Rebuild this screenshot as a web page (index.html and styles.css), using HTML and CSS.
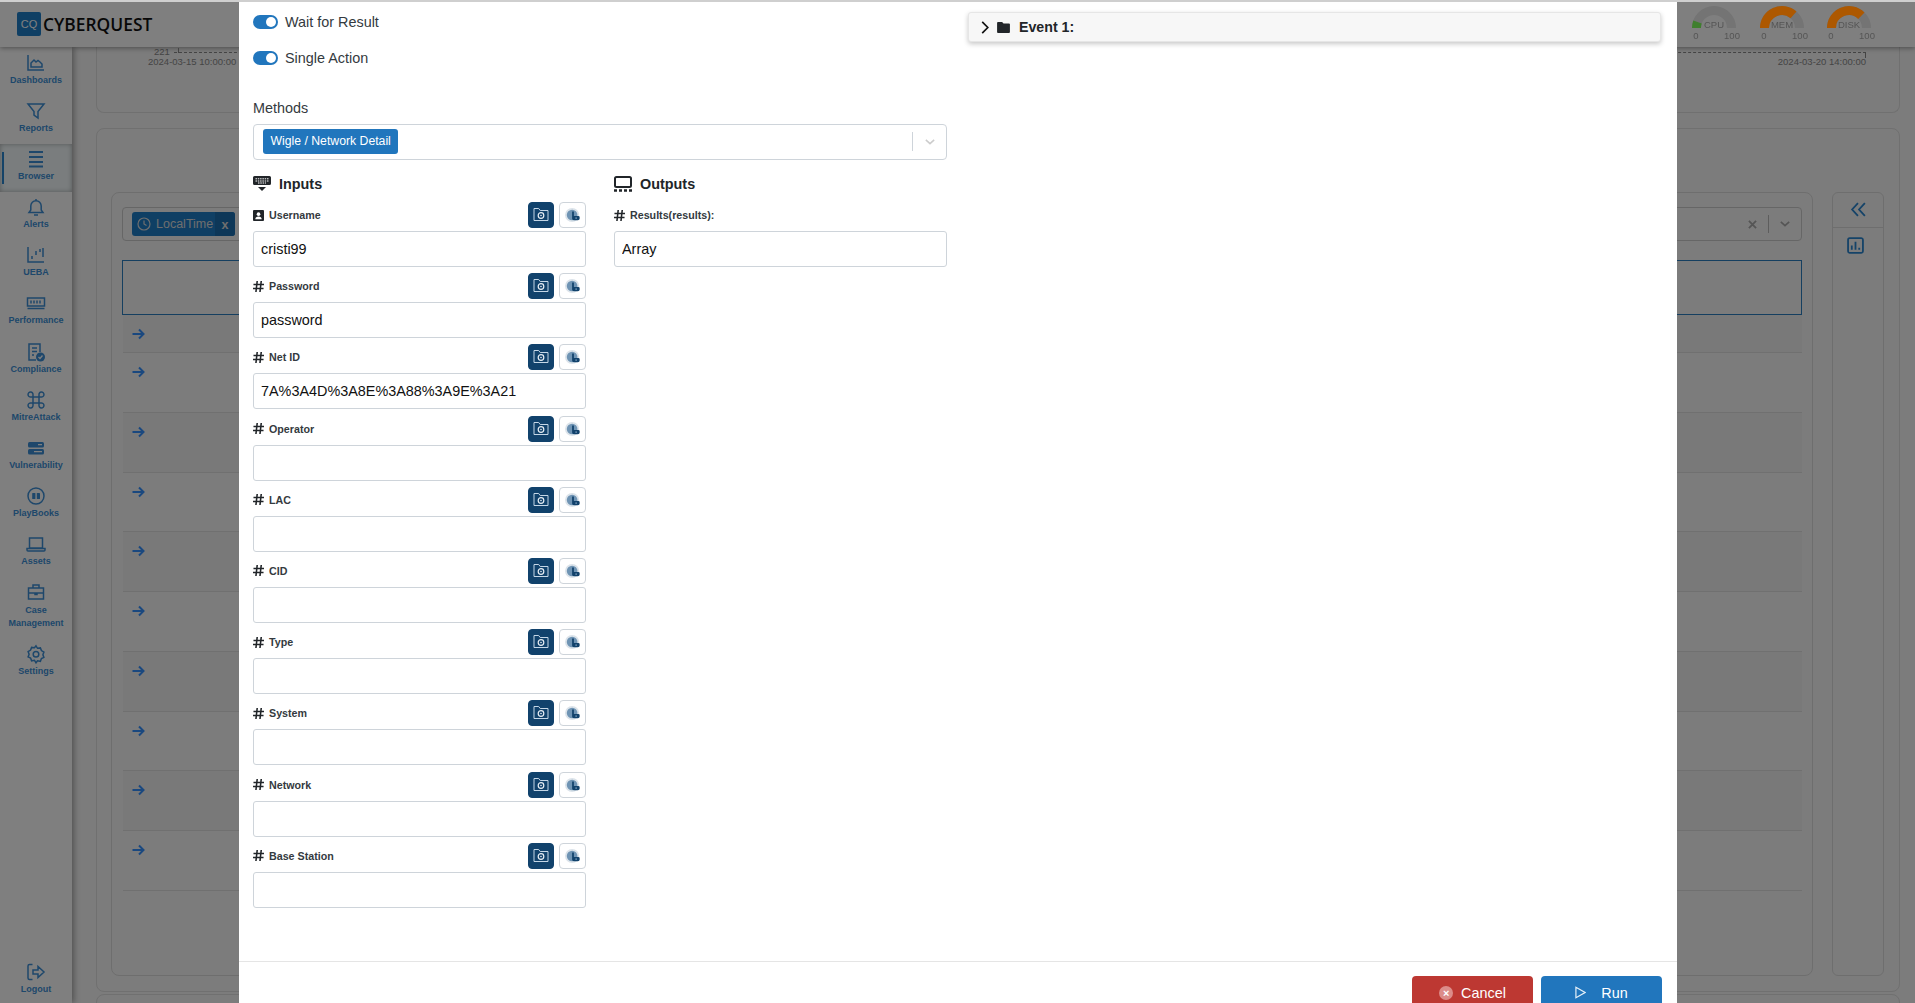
FILE: index.html
```html
<!DOCTYPE html>
<html lang="en">
<head>
<meta charset="UTF-8" />
<title>CyberQuest — Browser</title>
<link rel="stylesheet" href="styles.css">
</head>
<body>

<svg class="sprites" width="0" height="0">
  <symbol id="i-hash" viewBox="0 0 12 12">
    <path d="M4.600 0 3.200 12M9 0 7.600 12M.5 3.800h11.500M0 8.200h11.500" fill="none" stroke="currentColor" stroke-width="1.700"/>
  </symbol>
  <symbol id="i-folder-gear" viewBox="0 0 16 16">
    <path d="M1 13.500V1.500h4.700l1.500 2h7.800v10z" fill="none" stroke="#c4d6e6" stroke-width="1"/>
    <circle cx="8" cy="8.500" r="2.800" fill="none" stroke="#e8eef4" stroke-width="1.200"/>
    <circle cx="8" cy="8.500" r=".8" fill="#e8eef4"/>
  </symbol>
  <symbol id="i-duo" viewBox="0 0 18 18">
    <circle cx="8" cy="9" r="8" fill="#dbe3ea"/>
    <circle cx="8" cy="9" r="6" fill="#6f94b4"/>
    <path d="M8 5h2v5h5a1.500 1.500 0 0 1 1.500 1.500V13a2 2 0 0 1-2 2H10a2 2 0 0 1-2-2z" fill="#11426c"/>
    <circle cx="12.500" cy="12.500" r="1" fill="#6f94b4"/>
  </symbol>
  <symbol id="i-arrow" viewBox="0 0 14 14">
    <path d="M1.500 7h11M8 2.500 12.500 7 8 11.500" fill="none" stroke="currentColor" stroke-width="2"/>
  </symbol>
</svg>

<div class="page">
  <header class="topbar">
    <div class="brand">
      <span class="brand-mark">CQ</span>
      <span class="brand-name">CYBERQUEST</span>
    </div>
    <div class="gauges">
      <svg class="gauge" viewBox="0 0 56 40">
        <path class="gauge-track" d="M6 28a22 22 0 0 1 44 0h-9a13 13 0 0 0-26 0z"/>
        <path class="gauge-low" d="M6 28a22 22 0 0 1 1.300-7.500l8.400 3a13 13 0 0 0-.7 4.500z"/>
        <text x="28" y="28" text-anchor="middle">CPU</text>
        <text x="10" y="39" text-anchor="middle">0</text>
        <text x="46" y="39" text-anchor="middle">100</text>
      </svg>
      <svg class="gauge" viewBox="0 0 56 40">
        <path class="gauge-track" d="M6 28a22 22 0 0 1 44 0h-9a13 13 0 0 0-26 0z"/>
        <path class="gauge-high" d="M6 28a22 22 0 0 1 36.500-16.500l-6 6.800A13 13 0 0 0 15 28z"/>
        <text x="28" y="28" text-anchor="middle">MEM</text>
        <text x="10" y="39" text-anchor="middle">0</text>
        <text x="46" y="39" text-anchor="middle">100</text>
      </svg>
      <svg class="gauge" viewBox="0 0 56 40">
        <path class="gauge-track" d="M6 28a22 22 0 0 1 44 0h-9a13 13 0 0 0-26 0z"/>
        <path class="gauge-high" d="M6 28a22 22 0 0 1 37.500-15.500l-6.300 6.400A13 13 0 0 0 15 28z"/>
        <text x="28" y="28" text-anchor="middle">DISK</text>
        <text x="10" y="39" text-anchor="middle">0</text>
        <text x="46" y="39" text-anchor="middle">100</text>
      </svg>
    </div>
  </header>

  <div class="layout">
    <nav class="sidebar">
      <a class="nav-item">
        <svg class="nav-icon" viewBox="0 0 20 20"><path d="M2 2v15h16M5 14V10l3-3 2 2 2-1.500 2 1.500 2 2v3z"/></svg>
        <span>Dashboards</span>
      </a>
      <a class="nav-item">
        <svg class="nav-icon" viewBox="0 0 20 20"><path d="M2 3h16l-6 7.500V17l-4-3v-3.500z"/></svg>
        <span>Reports</span>
      </a>
      <a class="nav-item active">
        <svg class="nav-icon heavy" viewBox="0 0 20 20"><path d="M3 3h14M3 8h14M3 13h14M3 17.500h14"/></svg>
        <span>Browser</span>
      </a>
      <a class="nav-item">
        <svg class="nav-icon" viewBox="0 0 20 20"><path d="M3 15.500h14l-1.800-2.500V9a5.200 5.200 0 0 0-10.400 0v4zM8 18h4M10 2v1.500"/></svg>
        <span>Alerts</span>
      </a>
      <a class="nav-item">
        <svg class="nav-icon" viewBox="0 0 20 20"><path d="M2 2v15h16M6 14v-3M10 10V6M14 7V4M17 12V3"/></svg>
        <span>UEBA</span>
      </a>
      <a class="nav-item">
        <svg class="nav-icon" viewBox="0 0 20 20"><path d="M1.500 5h17v8h-17zM1.500 15.500h17M5 7.500v3M8 7.500v3M11 7.500v3M14 7.500v3"/></svg>
        <span>Performance</span>
      </a>
      <a class="nav-item">
        <svg class="nav-icon" viewBox="0 0 20 20"><path d="M10 18H3V2h11v8M6 6h5M6 9.500h5M6 13h2"/><circle class="solid" cx="14.500" cy="15" r="4.500"/><path class="cut" d="M12.500 15l1.500 1.500 2.500-3"/></svg>
        <span>Compliance</span>
      </a>
      <a class="nav-item">
        <svg class="nav-icon" viewBox="0 0 20 20"><path d="M7 7h6v6H7zM7 7H5a2.500 2.500 0 1 1 2-2zM13 7V5a2.500 2.500 0 1 1 2 2zM13 13h2a2.500 2.500 0 1 1-2 2zM7 13v2a2.500 2.500 0 1 1-2-2z"/></svg>
        <span>MitreAttack</span>
      </a>
      <a class="nav-item">
        <svg class="nav-icon" viewBox="0 0 20 20"><rect class="solid" x="2" y="4" width="16" height="5.500" rx="1.500"/><rect class="solid" x="2" y="11" width="16" height="5.500" rx="1.500"/><path class="cut" d="M12 6.700h4M8 13.700h8"/></svg>
        <span>Vulnerability</span>
      </a>
      <a class="nav-item">
        <svg class="nav-icon" viewBox="0 0 20 20"><circle cx="10" cy="10" r="8"/><rect class="solid" x="6.200" y="7" width="3.200" height="6" rx=".6"/><rect class="solid" x="10.800" y="7" width="3.200" height="6" rx=".6"/></svg>
        <span>PlayBooks</span>
      </a>
      <a class="nav-item">
        <svg class="nav-icon" viewBox="0 0 20 20"><path d="M3.500 4h13v10h-13zM1 14.500h18v1.500a1 1 0 0 1-1 1H2a1 1 0 0 1-1-1z"/></svg>
        <span>Assets</span>
      </a>
      <a class="nav-item two-line">
        <svg class="nav-icon" viewBox="0 0 20 20"><path d="M2.500 6h15v11h-15zM7 6V3h6v3M2.500 11h15M9 11h2v1.500H9z"/></svg>
        <span>Case Management</span>
      </a>
      <a class="nav-item">
        <svg class="nav-icon" viewBox="0 0 20 20"><path d="M10 1.800l1.500 2.500 2.900-.4 1 2.700 2.500 1.400-1 2.700 1 2.700-2.500 1.100-1 2.800-2.900-.5L10 18.800l-1.500-2.500-2.900.5-1-2.800-2.500-1.100 1-2.700-1-2.700 2.500-1.400 1-2.700 2.900.4z"/><circle cx="10" cy="10.300" r="2.800"/></svg>
        <span>Settings</span>
      </a>
      <a class="nav-item logout">
        <svg class="nav-icon" viewBox="0 0 20 20"><path d="M6.500 2.500H3.500a1.500 1.500 0 0 0-1.500 1.500v12a1.500 1.500 0 0 0 1.500 1.500h3M7 8h5V4.500l6 5.500-6 5.500V12H7z"/></svg>
        <span>Logout</span>
      </a>
    </nav>

    <main class="content">
      <section class="card chart-card">
        <div class="axis-row"><span>221</span><i class="axis-line"></i></div>
        <div class="axis-labels"><span>2024-03-15 10:00:00</span><span>2024-03-20 14:00:00</span></div>
      </section>

      <section class="card browser-card">
        <div class="browser-inner">
          <div class="filter-box">
            <span class="chip">
              <svg class="chip-clock" viewBox="0 0 14 14"><circle cx="7" cy="7" r="6"/><path d="M7 3.500V7l2.500 1.500"/></svg>
              <span class="chip-text">LocalTime</span>
              <span class="chip-x">x</span>
            </span>
            <span class="filter-tools">
              <svg class="tool-x" viewBox="0 0 10 10"><path d="M1 1l8 8M9 1l-8 8"/></svg>
              <i class="tool-sep"></i>
              <svg class="tool-chev" viewBox="0 0 12 8"><path d="M1 1.500 6 6l5-4.500"/></svg>
            </span>
          </div>
          <div class="head-box"></div>
          <div class="row short"><svg class="row-arrow"><use href="#i-arrow"/></svg></div>
          <div class="row"><svg class="row-arrow"><use href="#i-arrow"/></svg></div>
          <div class="row"><svg class="row-arrow"><use href="#i-arrow"/></svg></div>
          <div class="row"><svg class="row-arrow"><use href="#i-arrow"/></svg></div>
          <div class="row"><svg class="row-arrow"><use href="#i-arrow"/></svg></div>
          <div class="row"><svg class="row-arrow"><use href="#i-arrow"/></svg></div>
          <div class="row"><svg class="row-arrow"><use href="#i-arrow"/></svg></div>
          <div class="row"><svg class="row-arrow"><use href="#i-arrow"/></svg></div>
          <div class="row"><svg class="row-arrow"><use href="#i-arrow"/></svg></div>
          <div class="row"><svg class="row-arrow"><use href="#i-arrow"/></svg></div>
        </div>
        <aside class="side-panel">
          <div class="side-cell">
            <svg class="side-icon" viewBox="0 0 16 16"><path d="M7.500 2 2 8l5.500 6M14 2 8.500 8l5.500 6"/></svg>
          </div>
          <div class="side-cell">
            <svg class="side-icon chart" viewBox="0 0 16 16"><rect x="1" y="1" width="14" height="14" rx="1.500"/><path d="M4.500 12V8M8 12V4.500M11.500 12v-2"/></svg>
          </div>
        </aside>
      </section>

      <section class="card tail-card"></section>
    </main>
  </div>
</div>

<div class="backdrop"></div>

<div class="modal">
  <div class="modal-body">
    <div class="action-col">
      <label class="switch-row"><span class="switch"></span>Wait for Result</label>
      <label class="switch-row"><span class="switch"></span>Single Action</label>

      <div class="methods-label">Methods</div>
      <div class="select-box">
        <span class="tag">Wigle / Network Detail</span>
        <i class="select-sep"></i>
        <svg class="select-chev" viewBox="0 0 12 8"><path d="M1 1.500 6 6l5-4.500"/></svg>
      </div>

      <div class="io-grid">
        <div class="io-col">
          <h4 class="io-title">
            <svg class="io-icon" viewBox="0 0 18 16"><path d="M1.500 0h15A1.500 1.500 0 0 1 18 1.500v6A1.500 1.500 0 0 1 16.500 9h-15A1.500 1.500 0 0 1 0 7.500v-6A1.500 1.500 0 0 1 1.500 0z" fill="#212529"/><path d="M2.500 2.800h13M2.500 5h13M5 7h8" stroke="#fff" stroke-width="1" stroke-dasharray="1.500 .8"/><path d="M5 11h8l-4 4z" fill="#212529"/></svg>
            Inputs
          </h4>

          <div class="field">
            <div class="field-head">
              <svg class="field-icon" viewBox="0 0 12 12"><path d="M1 0h10a1 1 0 0 1 1 1v10a1 1 0 0 1-1 1H1a1 1 0 0 1-1-1V1a1 1 0 0 1 1-1z" fill="#212529"/><circle cx="6" cy="4.500" r="2" fill="#fff"/><path d="M2.500 10c0-2 1.500-3 3.500-3s3.500 1 3.500 3z" fill="#fff"/></svg>
              <span class="field-name">Username</span>
              <button class="btn-icon dark"><svg><use href="#i-folder-gear"/></svg></button>
              <button class="btn-icon light"><svg><use href="#i-duo"/></svg></button>
            </div>
            <input class="text-input" type="text" value="cristi99" />
          </div>

          <div class="field">
            <div class="field-head">
              <svg class="field-icon"><use href="#i-hash"/></svg>
              <span class="field-name">Password</span>
              <button class="btn-icon dark"><svg><use href="#i-folder-gear"/></svg></button>
              <button class="btn-icon light"><svg><use href="#i-duo"/></svg></button>
            </div>
            <input class="text-input" type="text" value="password" />
          </div>

          <div class="field">
            <div class="field-head">
              <svg class="field-icon"><use href="#i-hash"/></svg>
              <span class="field-name">Net ID</span>
              <button class="btn-icon dark"><svg><use href="#i-folder-gear"/></svg></button>
              <button class="btn-icon light"><svg><use href="#i-duo"/></svg></button>
            </div>
            <input class="text-input" type="text" value="7A%3A4D%3A8E%3A88%3A9E%3A21" />
          </div>

          <div class="field">
            <div class="field-head">
              <svg class="field-icon"><use href="#i-hash"/></svg>
              <span class="field-name">Operator</span>
              <button class="btn-icon dark"><svg><use href="#i-folder-gear"/></svg></button>
              <button class="btn-icon light"><svg><use href="#i-duo"/></svg></button>
            </div>
            <input class="text-input" type="text" />
          </div>

          <div class="field">
            <div class="field-head">
              <svg class="field-icon"><use href="#i-hash"/></svg>
              <span class="field-name">LAC</span>
              <button class="btn-icon dark"><svg><use href="#i-folder-gear"/></svg></button>
              <button class="btn-icon light"><svg><use href="#i-duo"/></svg></button>
            </div>
            <input class="text-input" type="text" />
          </div>

          <div class="field">
            <div class="field-head">
              <svg class="field-icon"><use href="#i-hash"/></svg>
              <span class="field-name">CID</span>
              <button class="btn-icon dark"><svg><use href="#i-folder-gear"/></svg></button>
              <button class="btn-icon light"><svg><use href="#i-duo"/></svg></button>
            </div>
            <input class="text-input" type="text" />
          </div>

          <div class="field">
            <div class="field-head">
              <svg class="field-icon"><use href="#i-hash"/></svg>
              <span class="field-name">Type</span>
              <button class="btn-icon dark"><svg><use href="#i-folder-gear"/></svg></button>
              <button class="btn-icon light"><svg><use href="#i-duo"/></svg></button>
            </div>
            <input class="text-input" type="text" />
          </div>

          <div class="field">
            <div class="field-head">
              <svg class="field-icon"><use href="#i-hash"/></svg>
              <span class="field-name">System</span>
              <button class="btn-icon dark"><svg><use href="#i-folder-gear"/></svg></button>
              <button class="btn-icon light"><svg><use href="#i-duo"/></svg></button>
            </div>
            <input class="text-input" type="text" />
          </div>

          <div class="field">
            <div class="field-head">
              <svg class="field-icon"><use href="#i-hash"/></svg>
              <span class="field-name">Network</span>
              <button class="btn-icon dark"><svg><use href="#i-folder-gear"/></svg></button>
              <button class="btn-icon light"><svg><use href="#i-duo"/></svg></button>
            </div>
            <input class="text-input" type="text" />
          </div>

          <div class="field">
            <div class="field-head">
              <svg class="field-icon"><use href="#i-hash"/></svg>
              <span class="field-name">Base Station</span>
              <button class="btn-icon dark"><svg><use href="#i-folder-gear"/></svg></button>
              <button class="btn-icon light"><svg><use href="#i-duo"/></svg></button>
            </div>
            <input class="text-input" type="text" />
          </div>
        </div>

        <div class="io-col">
          <h4 class="io-title">
            <svg class="io-icon" viewBox="0 0 18 16"><rect x="1" y="1" width="16" height="10" rx="1.500" fill="none" stroke="#212529" stroke-width="2"/><path d="M0 14.500h18" stroke="#212529" stroke-width="2.400" stroke-dasharray="3 2"/></svg>
            Outputs
          </h4>
          <div class="field">
            <div class="field-head">
              <svg class="field-icon"><use href="#i-hash"/></svg>
              <span class="field-name">Results(results):</span>
            </div>
            <input class="text-input" type="text" value="Array" />
          </div>
        </div>
      </div>
    </div>

    <div class="event-col">
      <div class="event-bar">
        <svg class="event-chev" viewBox="0 0 8 14"><path d="M1 1l6 6-6 6"/></svg>
        <svg class="event-folder" viewBox="0 0 14 12"><path d="M1 0h4.500l1.500 1.500h6a1 1 0 0 1 1 1V11a1 1 0 0 1-1 1H1a1 1 0 0 1-1-1V1a1 1 0 0 1 1-1z"/></svg>
        <span>Event 1:</span>
      </div>
    </div>
  </div>

  <div class="modal-footer">
    <button class="btn-action cancel">
      <span class="cancel-dot">×</span>Cancel
    </button>
    <button class="btn-action run">
      <svg class="run-icon" viewBox="0 0 12 14"><path d="M1 1.200v11.600L11 7z"/></svg>Run
    </button>
  </div>
</div>

<div class="top-line"></div>

</body>
</html>
```

FILE: styles.css
```css
* {
  box-sizing: border-box;
}
html, body {
  margin: 0;
  height: 1003px;
  overflow: hidden;
}
body {
  font-family: 'Liberation Sans', Arial, sans-serif;
  color: #212529;
  background: #fff;
}
.sprites {
  position: absolute;
}

/* page behind the dialog */
.page {
  height: 1003px;
  display: flex;
  flex-direction: column;
  background: #f8f8f8;
}
.topbar {
  height: 47px;
  flex: none;
  display: flex;
  align-items: center;
  justify-content: space-between;
  background: #fff;
  box-shadow: 0 1px 5px rgba(0,0,0,0.4);
  position: relative;
  padding: 0 0 0 17px;
}
.brand {
  display: flex;
  align-items: center;
  gap: 2px;
}
.brand-mark {
  width: 24px;
  height: 24px;
  border-radius: 2px;
  background: #1f7fc9;
  color: #fff;
  font-size: 11px;
  display: flex;
  align-items: center;
  justify-content: center;
}
.brand-name {
  font-family: 'Open Sans', sans-serif;
  font-size: 17.400px;
  font-weight: 600;
  color: #111;
}
/* the gauges keep their colour through the backdrop, so they sit above it */
.gauges {
  display: flex;
  gap: 11.500px;
  margin-right: 38px;
  align-self: flex-start;
  position: relative;
  z-index: 11;
}
.gauge {
  width: 56px;
  height: 40px;
  overflow: visible;
}
.gauge text {
  font-size: 9.500px;
  fill: #555;
}
.gauge-track {
  fill: #747474;
}
.gauge-low {
  fill: #3f7f2e;
}
.gauge-high {
  fill: #ad5800;
}

.layout {
  flex: 1;
  display: flex;
  min-height: 0;
}
.sidebar {
  width: 72px;
  flex: none;
  display: flex;
  flex-direction: column;
  background: #fff;
  box-shadow: 2px 0 6px rgba(0,0,0,0.35);
  padding-top: 1px;
}
.nav-item {
  min-height: 48.100px;
  padding: 5px 6px 0;
  display: flex;
  flex-direction: column;
  align-items: center;
  text-align: center;
  color: #3d8fd6;
  font-size: 9px;
  font-weight: 700;
  line-height: 13px;
  position: relative;
}
.nav-item span {
  margin-top: 1px;
}
.nav-item.two-line {
  min-height: 62px;
}
.nav-item.two-line span {
  margin-top: 1.500px;
}
.nav-item.active {
  background: #f4fbfc;
  box-shadow: inset 0 0 5px rgba(0,0,0,0.3);
}
.nav-item.active::before {
  content: "";
  position: absolute;
  left: 2px;
  top: 8px;
  bottom: 8px;
  width: 2px;
  background: #2a86d0;
}
.nav-item.logout {
  margin-top: auto;
  min-height: 46px;
}
.nav-icon {
  width: 20px;
  height: 20px;
  flex: none;
  fill: none;
  stroke: #3d8fd6;
  stroke-width: 1.500;
}
.nav-icon.heavy {
  stroke-width: 2;
}
.nav-icon .solid {
  fill: #3d8fd6;
  stroke: none;
}
.nav-icon .cut {
  stroke: #fff;
  stroke-width: 1.300;
}

.content {
  flex: 1;
  min-width: 0;
  padding: 0 15px 0 24px;
}
.card {
  border: 1px solid #e0e0e0;
  border-radius: 8px;
  background: #f8f8f8;
}
.chart-card {
  height: 66px;
  border-top: 0;
  border-radius: 0 0 8px 8px;
  margin-bottom: 15px;
  padding-left: 51px;
  padding-right: 33px;
  font-size: 9.500px;
  color: #8a8a8a;
  line-height: 10px;
}
.axis-row {
  display: flex;
  align-items: center;
  gap: 4px;
  height: 10px;
  padding-left: 6px;
}
.axis-line {
  flex: 1;
  border-top: 1px dashed #888;
  position: relative;
}
.axis-line::before {
  content: "";
  position: absolute;
  left: 4px;
  top: -5px;
  height: 5px;
  border-left: 1px solid #888;
}
.axis-line::after {
  content: "";
  position: absolute;
  right: 0;
  top: 0;
  height: 5px;
  border-left: 1px solid #888;
}
.axis-labels {
  display: flex;
  justify-content: space-between;
}
.browser-card {
  height: 864px;
  padding: 63px 15px 15px 14px;
  display: flex;
  gap: 19px;
  margin-bottom: 2px;
}
.browser-inner {
  flex: 1;
  border: 1px solid #ddd;
  border-radius: 8px;
  background: #f8f8f8;
  padding: 14px 10px;
  overflow: hidden;
}
.filter-box {
  height: 34px;
  border: 1px solid #ccc;
  border-radius: 4px;
  padding: 4px 11px 4px 9px;
  display: flex;
  align-items: center;
  justify-content: space-between;
  background: #f8f8f8;
}
.chip {
  display: flex;
  align-items: center;
  height: 24px;
  width: 103px;
  border-radius: 3px;
  background: #1f7fc9;
  color: #ddd;
  font-size: 12.500px;
  overflow: hidden;
}
.chip-clock {
  width: 14px;
  height: 14px;
  margin: 0 5px;
  fill: none;
  stroke: #ddd;
  stroke-width: 1.200;
  flex: none;
}
.chip-text {
  flex: 1;
}
.chip-x {
  width: 20px;
  height: 24px;
  line-height: 26px;
  text-align: center;
  font-weight: 700;
  background: #1a6fb0;
}
.filter-tools {
  display: flex;
  align-items: center;
}
.tool-x {
  width: 9px;
  height: 9px;
  fill: none;
  stroke: #aaa;
  stroke-width: 2;
}
.tool-sep {
  width: 1px;
  height: 18px;
  background: #bbb;
  margin: 0 11px;
}
.tool-chev {
  width: 10px;
  height: 8px;
  fill: none;
  stroke: #aaa;
  stroke-width: 2;
}
.head-box {
  height: 55px;
  margin-top: 19px;
  border: 1px solid #2a7fc0;
}
.row {
  height: 59.750px;
  margin-left: 1px;
  padding: 12px 0 0 8px;
  border-bottom: 1px solid #e0e0e0;
}
.row.short {
  height: 38px;
}
.row:nth-of-type(odd) {
  background: #f2f2f2;
}
.row-arrow {
  width: 14px;
  height: 14px;
  color: #3490ff;
  display: block;
}
.side-panel {
  width: 52px;
  flex: none;
  border: 1px solid #ddd;
  border-radius: 6px;
}
.side-cell {
  height: 35px;
  padding-bottom: 2px;
  display: flex;
  align-items: center;
  justify-content: center;
  border-bottom: 1px solid #ddd;
}
.side-cell:last-child {
  border-bottom: 0;
  height: 35px;
  padding-bottom: 0;
}
.side-icon {
  width: 17px;
  height: 17px;
  fill: none;
  stroke: #2a86d0;
  stroke-width: 1.700;
}
.side-icon.chart {
  margin-right: 5px;
}
.tail-card {
  height: 40px;
}

/* dialog */
.backdrop {
  position: fixed;
  inset: 0;
  background: rgba(0,0,0,0.5);
  z-index: 10;
}
.top-line {
  position: fixed;
  left: 0;
  right: 0;
  top: 0;
  height: 2px;
  background: #cfcfcf;
  z-index: 30;
}
.modal {
  position: fixed;
  left: 239px;
  top: 2px;
  width: 1438px;
  height: 1001px;
  background: #fff;
  z-index: 20;
  display: flex;
  flex-direction: column;
  overflow: hidden;
}
.modal-body {
  flex: 1;
  min-height: 0;
  display: grid;
  grid-template-columns: 694px 693px;
  column-gap: 21px;
  padding: 2px 16px 0 14px;
}
.switch-row {
  height: 36px;
  display: flex;
  align-items: center;
  gap: 7px;
  font-size: 14.400px;
  color: #343a40;
}
.switch {
  width: 25px;
  height: 14px;
  border-radius: 7px;
  background: #2176bd;
  position: relative;
}
.switch::after {
  content: "";
  position: absolute;
  right: 2px;
  top: 2px;
  width: 10px;
  height: 10px;
  border-radius: 50%;
  background: #fff;
}
.methods-label {
  margin-top: 24px;
  font-size: 14.400px;
  line-height: 17px;
  color: #343a40;
}
.select-box {
  height: 36px;
  margin-top: 7px;
  border: 1px solid #ced4da;
  border-radius: 4px;
  display: flex;
  align-items: flex-start;
  padding: 4px 0 0 9px;
}
.tag {
  height: 25px;
  padding: 0 7.500px;
  border-radius: 3px;
  background: #2176bd;
  color: #fff;
  font-size: 12.240px;
  line-height: 24px;
}
.select-sep {
  width: 1px;
  height: 19px;
  background: #ced4da;
  margin: 3px 0 0 auto;
}
.select-chev {
  width: 10px;
  height: 8px;
  margin: 9px 11px 0 12px;
  fill: none;
  stroke: #ccc;
  stroke-width: 1.800;
}
.io-grid {
  display: grid;
  grid-template-columns: 333px 333px;
  column-gap: 28px;
  margin-top: 14px;
}
.io-title {
  display: flex;
  align-items: center;
  gap: 8px;
  height: 20px;
  margin: 0 0 8px;
  font-size: 14.400px;
  font-weight: 700;
  color: #212529;
}
.io-icon {
  width: 18px;
  height: 16px;
  flex: none;
}
.field {
  margin-bottom: 6.200px;
}
.field-head {
  height: 29px;
  display: flex;
  align-items: center;
  gap: 3px;
  padding-bottom: 3px;
}
.field-icon {
  width: 11px;
  height: 11px;
  flex: none;
  color: #212529;
  margin-right: 2px;
}
.field-name {
  flex: 1;
  font-size: 10.700px;
  font-weight: 700;
  color: #343a40;
}
.btn-icon {
  height: 26px;
  flex: none;
  padding: 0;
  border-radius: 4px;
  display: flex;
  align-items: center;
  justify-content: center;
}
.btn-icon svg {
  width: 16px;
  height: 16px;
}
.btn-icon.dark {
  width: 26px;
  background: #11426c;
  border: 1px solid #11426c;
  margin-right: 2px;
}
.btn-icon.light {
  width: 27px;
  background: #fff;
  border: 1px solid #ced4da;
}
.text-input {
  display: block;
  width: 100%;
  height: 36px;
  padding: 0 7px;
  border: 1px solid #ced4da;
  border-radius: 3px;
  font-family: 'Liberation Sans', Arial, sans-serif;
  font-size: 14.400px;
  color: #111;
  outline: none;
}
.event-bar {
  height: 30px;
  margin-top: 8px;
  display: flex;
  align-items: center;
  padding-left: 12px;
  background: #f7f7f7;
  border: 1px solid #e6e6e6;
  border-radius: 3px;
  box-shadow: 0 2px 5px rgba(0,0,0,0.22);
  font-size: 14.200px;
  font-weight: 700;
  color: #212529;
}
.event-chev {
  width: 8px;
  height: 13px;
  fill: none;
  stroke: #111;
  stroke-width: 1.800;
  margin-right: 8px;
}
.event-folder {
  width: 13px;
  height: 11px;
  fill: #212529;
  margin-right: 9px;
}
.modal-footer {
  height: 42px;
  flex: none;
  border-top: 1px solid #e5e5e5;
  padding: 14px 15px 0 0;
  display: flex;
  justify-content: flex-end;
  align-items: flex-start;
  gap: 8px;
}
.btn-action {
  width: 121px;
  height: 36px;
  flex: none;
  border: 0;
  border-radius: 4px;
  color: #fff;
  font-family: 'Liberation Sans', Arial, sans-serif;
  font-size: 14.400px;
  display: flex;
  justify-content: center;
  padding-top: 9px;
  gap: 8px;
}
.btn-action.cancel {
  background: #bd3832;
}
.btn-action.run {
  background: #2176bd;
  gap: 15px;
}
.cancel-dot {
  width: 14px;
  height: 14px;
  margin-top: 1px;
  border-radius: 50%;
  background: #dc8c89;
  font-size: 11px;
  font-weight: 700;
  line-height: 14px;
}
.run-icon {
  width: 11px;
  height: 13px;
  margin-top: 1px;
  fill: none;
  stroke: #e6f0f8;
  stroke-width: 1.300;
}
```
